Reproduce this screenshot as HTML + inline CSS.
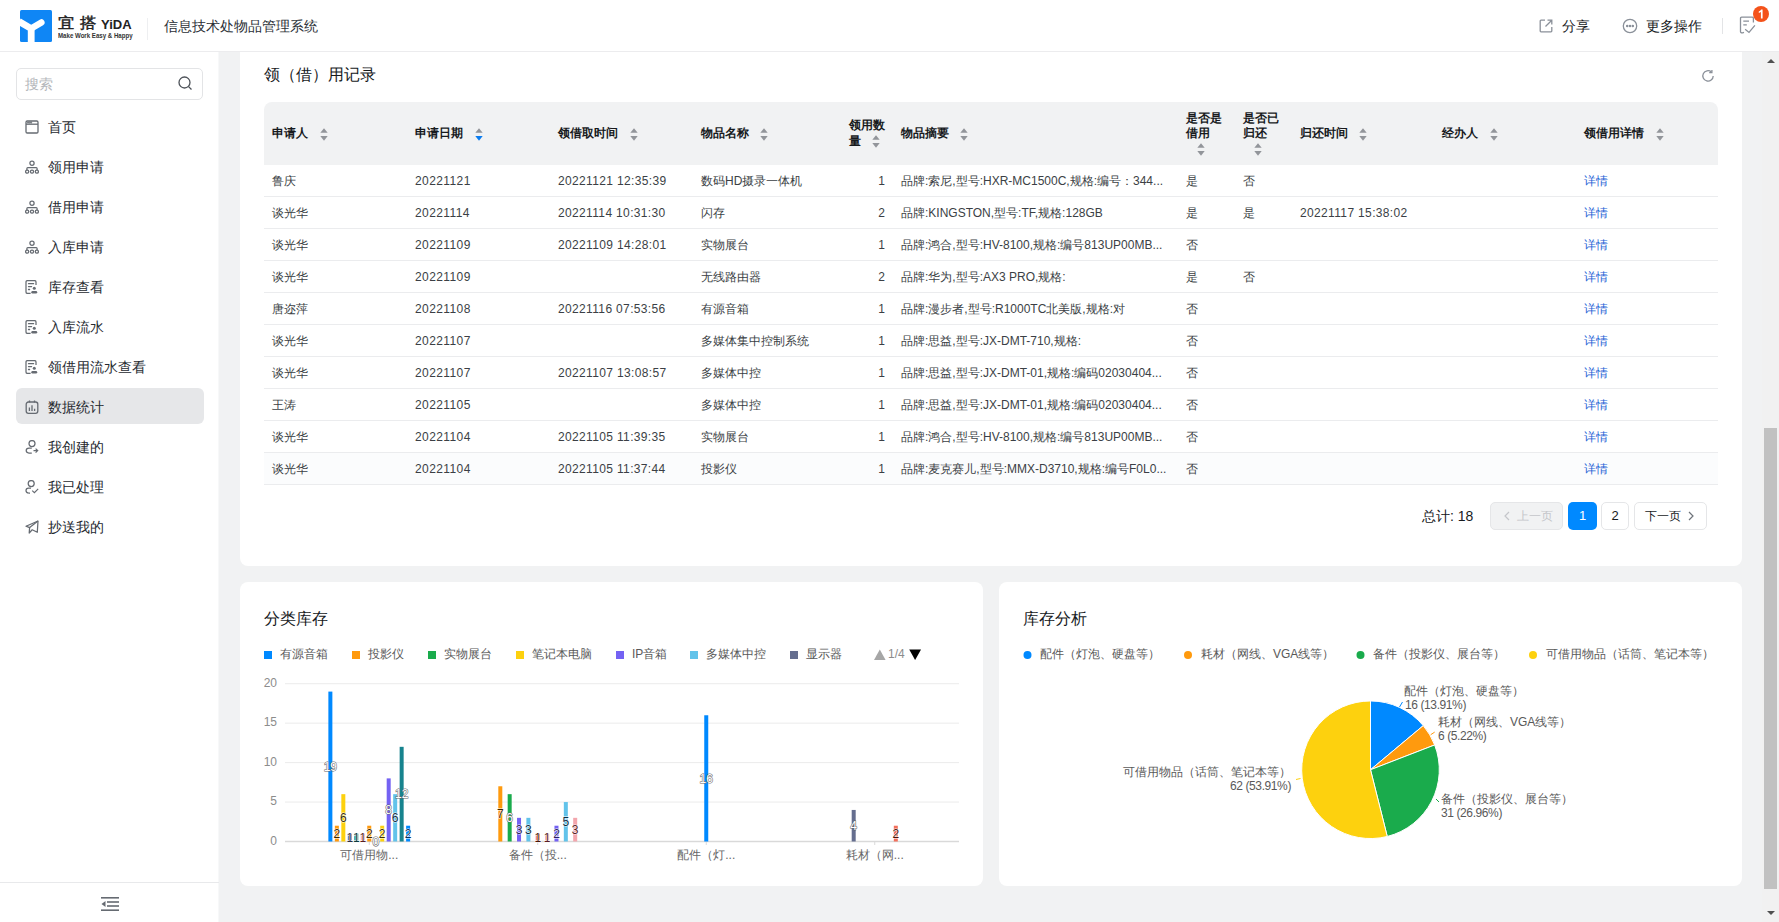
<!DOCTYPE html>
<html><head><meta charset="utf-8">
<style>
*{box-sizing:border-box;margin:0;padding:0}
html,body{width:1779px;height:922px;overflow:hidden;background:#f1f2f3;font-family:"Liberation Sans",sans-serif;color:#171a1d}
.abs{position:absolute}
#hdr{position:absolute;z-index:5;left:0;top:0;width:1779px;height:52px;background:#fff;border-bottom:1px solid #ececee}
#side{position:absolute;left:0;top:51px;width:219px;height:871px;background:#fff;box-shadow:inset -1px 0 0 #f7f8f9}
.nav{position:absolute;left:16px;width:188px;height:36px;border-radius:6px}
.nav.on{background:#e6e7e9}
.nav svg{position:absolute;left:9px;top:12px}
.nav span{position:absolute;left:32px;top:11px;font-size:14px;line-height:16px;color:#262a30}
.card{position:absolute;background:#fff;border-radius:8px}
.t12{font-size:12px;line-height:14px}
.th{position:absolute;font-size:12px;font-weight:bold;line-height:15px;color:#171a1d}
.td{position:absolute;font-size:12px;line-height:14px;color:#3b3f45;white-space:nowrap}
.row{position:absolute;left:24px;width:1454px;height:32px;border-bottom:1px solid #ecedef}
.sort{display:inline-block;width:8px;height:13px;vertical-align:middle}
.lnk{color:#1f63d6}
</style></head><body>

<!-- HEADER -->
<div id="hdr">
  <svg class="abs" style="left:20px;top:10px" width="32" height="32" viewBox="0 0 32 32">
    <rect x="0" y="0" width="32" height="32" rx="1.5" fill="#0f86f5"/>
    <path d="M-1 11.5 L11.2 18.6 L11.2 33" stroke="#fff" stroke-width="6.8" fill="none" stroke-linejoin="miter"/>
    <path d="M11.2 18.6 L21.4 12.4" stroke="#fff" stroke-width="6.4" fill="none" stroke-linecap="round"/>
  </svg>
  <div class="abs" style="left:58px;top:13px;font-size:16.5px;line-height:20px;font-weight:normal;-webkit-text-stroke:0.5px #222;color:#222;letter-spacing:5px;transform-origin:0 0;transform:scaleY(0.92)">宜搭</div>
  <div class="abs" style="left:101px;top:17px;font-size:13px;line-height:16px;font-weight:bold;color:#222">YiDA</div>
  <div class="abs" style="left:58px;top:32px;font-size:6.5px;line-height:8px;font-weight:bold;color:#333;white-space:nowrap;transform-origin:0 0;transform:scaleX(0.94)">Make Work Easy &amp; Happy</div>
  <div class="abs" style="left:147px;top:18px;width:1px;height:22px;background:#eeeff1"></div>
  <div class="abs" style="left:164px;top:18px;font-size:14px;line-height:16px;color:#2b2f36">信息技术处物品管理系统</div>

  <!-- right -->
  <svg class="abs" style="left:1539px;top:19px" width="14" height="14" viewBox="0 0 14 14" fill="none" stroke="#8a9099" stroke-width="1.3">
    <path d="M6 1.2 H2 a0.8 0.8 0 0 0 -0.8 0.8 V12 a0.8 0.8 0 0 0 0.8 0.8 H12 a0.8 0.8 0 0 0 0.8 -0.8 V8"/>
    <path d="M8.5 1.2 H12.8 V5.5 M12.8 1.2 L6.5 7.5"/>
  </svg>
  <div class="abs" style="left:1562px;top:18px;font-size:14px;line-height:16px;color:#171a1d">分享</div>
  <svg class="abs" style="left:1622px;top:18px" width="16" height="16" viewBox="0 0 16 16" fill="none" stroke="#8a9099" stroke-width="1.3">
    <circle cx="8" cy="8" r="6.7"/>
    <circle cx="5.2" cy="8" r="0.6" fill="#8a9099"/><circle cx="8" cy="8" r="0.6" fill="#8a9099"/><circle cx="10.8" cy="8" r="0.6" fill="#8a9099"/>
  </svg>
  <div class="abs" style="left:1646px;top:18px;font-size:14px;line-height:16px;color:#171a1d">更多操作</div>
  <div class="abs" style="left:1722px;top:18px;width:1px;height:16px;background:#e3e4e6"></div>
  <svg class="abs" style="left:1739px;top:16px" width="18" height="18" viewBox="0 0 18 18" fill="none" stroke="#8a9099" stroke-width="1.3">
    <path d="M5 16.3 L3.6 16.8 Q1.5 17 1.5 15.8 V2.3 Q1.5 1.2 2.6 1.2 H13.3 Q14.4 1.2 14.4 2.3 V6.4"/>
    <path d="M4.3 5.2 H10 M4.3 8.9 H7.8"/>
    <path d="M6.1 13.3 L10 16.4 L15.9 9.4"/>
  </svg>
  <svg class="abs" style="left:1753px;top:6px" width="16" height="16" viewBox="0 0 16 16"><circle cx="8" cy="8" r="8" fill="#f4521a"/><path d="M8.2 3.6 H9.6 V12.4 H7.9 V6 Q7 6.7 5.8 7 V5.5 Q7.3 5 8.2 3.6 Z" fill="#fff"/></svg>
</div>

<!-- SIDEBAR -->
<div id="side">
  <div class="abs" style="left:16px;top:17px;width:187px;height:32px;border:1px solid #e3e4e6;border-radius:5px"></div>
  <div class="abs" style="left:25px;top:25px;font-size:14px;line-height:16px;color:#b4b7bb">搜索</div>
  <svg class="abs" style="left:178px;top:25px" width="15" height="15" viewBox="0 0 15 15" fill="none" stroke="#4d5259" stroke-width="1.3"><circle cx="6.5" cy="6.5" r="5.5"/><path d="M10.6 10.6 L13.5 13.5"/></svg>
  <div class="nav" style="top:57px"><svg width="14" height="14" viewBox="0 0 14 14" fill="none" stroke="#666b72" stroke-width="1.3"><rect x="1" y="1" width="12" height="12" rx="1.2"/><path d="M1 4.2 H13"/><circle cx="3" cy="2.6" r="0.35" fill="#666b72"/><circle cx="4.6" cy="2.6" r="0.35" fill="#666b72"/><circle cx="6.2" cy="2.6" r="0.35" fill="#666b72"/></svg><span>首页</span></div>
<div class="nav" style="top:97px"><svg width="14" height="14" viewBox="0 0 14 14" fill="none" stroke="#666b72" stroke-width="1.25"><circle cx="7" cy="3.3" r="2.1"/><path d="M1.9 10 V8.4 Q1.9 7.5 2.8 7.5 H11.2 Q12.1 7.5 12.1 8.4 V10"/><rect x="0.6" y="10" width="3.1" height="3.2" rx="1.4"/><rect x="5.45" y="10" width="3.1" height="3.2" rx="1.4"/><rect x="10.3" y="10" width="3.1" height="3.2" rx="1.4"/></svg><span>领用申请</span></div>
<div class="nav" style="top:137px"><svg width="14" height="14" viewBox="0 0 14 14" fill="none" stroke="#666b72" stroke-width="1.25"><circle cx="7" cy="3.3" r="2.1"/><path d="M1.9 10 V8.4 Q1.9 7.5 2.8 7.5 H11.2 Q12.1 7.5 12.1 8.4 V10"/><rect x="0.6" y="10" width="3.1" height="3.2" rx="1.4"/><rect x="5.45" y="10" width="3.1" height="3.2" rx="1.4"/><rect x="10.3" y="10" width="3.1" height="3.2" rx="1.4"/></svg><span>借用申请</span></div>
<div class="nav" style="top:177px"><svg width="14" height="14" viewBox="0 0 14 14" fill="none" stroke="#666b72" stroke-width="1.25"><circle cx="7" cy="3.3" r="2.1"/><path d="M1.9 10 V8.4 Q1.9 7.5 2.8 7.5 H11.2 Q12.1 7.5 12.1 8.4 V10"/><rect x="0.6" y="10" width="3.1" height="3.2" rx="1.4"/><rect x="5.45" y="10" width="3.1" height="3.2" rx="1.4"/><rect x="10.3" y="10" width="3.1" height="3.2" rx="1.4"/></svg><span>入库申请</span></div>
<div class="nav" style="top:217px"><svg width="14" height="14" viewBox="0 0 14 14" fill="none" stroke="#666b72" stroke-width="1.25"><path d="M5.6 13.4 H2.4 Q1 13.4 1 12 V2 Q1 0.6 2.4 0.6 H9.6 Q11 0.6 11 2 V5"/><path d="M3.5 3.7 H8.6 M3.5 6.6 H6.6 M3.5 9.5 H4.6" stroke-width="1.3" stroke-linecap="round"/><circle cx="9.3" cy="8.3" r="1.5" fill="#666b72" stroke="none"/><rect x="6.3" y="11.1" width="5.9" height="2.4" rx="1.2" fill="#666b72" stroke="none"/></svg><span>库存查看</span></div>
<div class="nav" style="top:257px"><svg width="14" height="14" viewBox="0 0 14 14" fill="none" stroke="#666b72" stroke-width="1.25"><path d="M5.6 13.4 H2.4 Q1 13.4 1 12 V2 Q1 0.6 2.4 0.6 H9.6 Q11 0.6 11 2 V5"/><path d="M3.5 3.7 H8.6 M3.5 6.6 H6.6 M3.5 9.5 H4.6" stroke-width="1.3" stroke-linecap="round"/><circle cx="9.3" cy="8.3" r="1.5" fill="#666b72" stroke="none"/><rect x="6.3" y="11.1" width="5.9" height="2.4" rx="1.2" fill="#666b72" stroke="none"/></svg><span>入库流水</span></div>
<div class="nav" style="top:297px"><svg width="14" height="14" viewBox="0 0 14 14" fill="none" stroke="#666b72" stroke-width="1.25"><path d="M5.6 13.4 H2.4 Q1 13.4 1 12 V2 Q1 0.6 2.4 0.6 H9.6 Q11 0.6 11 2 V5"/><path d="M3.5 3.7 H8.6 M3.5 6.6 H6.6 M3.5 9.5 H4.6" stroke-width="1.3" stroke-linecap="round"/><circle cx="9.3" cy="8.3" r="1.5" fill="#666b72" stroke="none"/><rect x="6.3" y="11.1" width="5.9" height="2.4" rx="1.2" fill="#666b72" stroke="none"/></svg><span>领借用流水查看</span></div>
<div class="nav on" style="top:337px"><svg width="14" height="14" viewBox="0 0 14 14" fill="none" stroke="#666b72" stroke-width="1.3"><rect x="1.2" y="2" width="11.6" height="11.3" rx="2.2"/><path d="M4.5 0.6 V2.4 M9.5 0.6 V2.4"/><path d="M4.4 7.6 V11 M7 5.2 V11 M9.6 8.8 V11" stroke-width="1.3"/></svg><span>数据统计</span></div>
<div class="nav" style="top:377px"><svg width="14" height="14" viewBox="0 0 14 14" fill="none" stroke="#666b72" stroke-width="1.25"><circle cx="7" cy="3.6" r="3"/><path d="M6.8 8.2 H4 Q1.2 8.3 1.2 10.6 Q1.2 13 4 13 H6.8"/><path d="M8.5 10.6 H12.6 M10.6 8.6 L12.7 10.6 L10.6 12.6" stroke-width="1.2"/></svg><span>我创建的</span></div>
<div class="nav" style="top:417px"><svg width="14" height="14" viewBox="0 0 14 14" fill="none" stroke="#666b72" stroke-width="1.25"><circle cx="6.2" cy="3.6" r="3"/><path d="M6 8.2 H3.6 Q1 8.3 1 10.5 Q1 12.9 3.6 13 H5"/><path d="M7.2 10.6 L9.4 12.6 L13.2 8.8" stroke-width="1.2"/></svg><span>我已处理</span></div>
<div class="nav" style="top:457px"><svg width="14" height="14" viewBox="0 0 14 14" fill="none" stroke="#666b72" stroke-width="1.25" stroke-linejoin="round"><path d="M13 1 L1 6.2 L4.6 7.6 L4.2 13 L7.2 9.8 L12.3 12.3 Z"/><path d="M13 1 L4.6 7.6"/></svg><span>抄送我的</span></div>
<div class="abs" style="left:0;top:831px;width:219px;height:1px;background:#e8e9eb"></div>
<svg class="abs" style="left:101px;top:846px" width="18" height="14" viewBox="0 0 18 14" fill="#666b72"><rect x="0" y="0" width="18" height="1.6"/><rect x="6" y="4.2" width="12" height="1.6"/><rect x="6" y="8.2" width="12" height="1.6"/><rect x="0" y="12.4" width="18" height="1.6"/><path d="M0.5 7 L4.5 4 V10 Z"/></svg>

</div>

<!-- CONTENT -->
<div class="card" style="left:240px;top:52px;width:1502px;height:514px;border-radius:0 0 8px 8px"></div>
<div class="abs" style="left:264px;top:66px;font-size:16px;line-height:18px;color:#171a1d">领（借）用记录</div>
<svg class="abs" style="left:1701px;top:69px" width="14" height="14" viewBox="0 0 14 14" fill="none" stroke="#8a9099" stroke-width="1.3"><path d="M12.2 7 A5.2 5.2 0 1 1 10.4 3"/><path d="M10.9 0.9 V3.6 H8.2" stroke-linejoin="miter"/></svg>
<div class="abs" style="left:264px;top:102px;width:1454px;height:63px;background:#f1f2f3;border-radius:8px 8px 0 0"></div>
<div class="th" style="left:272px;top:126px">申请人</div>
<svg class="abs" style="left:319.5px;top:128px" width="8" height="13" viewBox="0 0 8 13"><path d="M4 0.3 L7.7 4.8 H0.3 Z" fill="#92959a"/><path d="M4 12.8 L7.7 8 H0.3 Z" fill="#92959a"/></svg>
<div class="th" style="left:415px;top:126px">申请日期</div>
<svg class="abs" style="left:474.5px;top:128px" width="8" height="13" viewBox="0 0 8 13"><path d="M4 0.3 L7.7 4.8 H0.3 Z" fill="#92959a"/><path d="M4 12.8 L7.7 8 H0.3 Z" fill="#0a7cf0"/></svg>
<div class="th" style="left:558px;top:126px">领借取时间</div>
<svg class="abs" style="left:629.5px;top:128px" width="8" height="13" viewBox="0 0 8 13"><path d="M4 0.3 L7.7 4.8 H0.3 Z" fill="#92959a"/><path d="M4 12.8 L7.7 8 H0.3 Z" fill="#92959a"/></svg>
<div class="th" style="left:701px;top:126px">物品名称</div>
<svg class="abs" style="left:759.5px;top:128px" width="8" height="13" viewBox="0 0 8 13"><path d="M4 0.3 L7.7 4.8 H0.3 Z" fill="#92959a"/><path d="M4 12.8 L7.7 8 H0.3 Z" fill="#92959a"/></svg>
<div class="th" style="left:901px;top:126px">物品摘要</div>
<svg class="abs" style="left:959.5px;top:128px" width="8" height="13" viewBox="0 0 8 13"><path d="M4 0.3 L7.7 4.8 H0.3 Z" fill="#92959a"/><path d="M4 12.8 L7.7 8 H0.3 Z" fill="#92959a"/></svg>
<div class="th" style="left:1300px;top:126px">归还时间</div>
<svg class="abs" style="left:1358.5px;top:128px" width="8" height="13" viewBox="0 0 8 13"><path d="M4 0.3 L7.7 4.8 H0.3 Z" fill="#92959a"/><path d="M4 12.8 L7.7 8 H0.3 Z" fill="#92959a"/></svg>
<div class="th" style="left:1442px;top:126px">经办人</div>
<svg class="abs" style="left:1489.5px;top:128px" width="8" height="13" viewBox="0 0 8 13"><path d="M4 0.3 L7.7 4.8 H0.3 Z" fill="#92959a"/><path d="M4 12.8 L7.7 8 H0.3 Z" fill="#92959a"/></svg>
<div class="th" style="left:1584px;top:126px">领借用详情</div>
<svg class="abs" style="left:1655.5px;top:128px" width="8" height="13" viewBox="0 0 8 13"><path d="M4 0.3 L7.7 4.8 H0.3 Z" fill="#92959a"/><path d="M4 12.8 L7.7 8 H0.3 Z" fill="#92959a"/></svg>
<div class="th" style="left:849px;top:117px;line-height:16px">领用数<br>量</div>
<svg class="abs" style="left:871.5px;top:135px" width="8" height="13" viewBox="0 0 8 13"><path d="M4 0.3 L7.7 4.8 H0.3 Z" fill="#92959a"/><path d="M4 12.8 L7.7 8 H0.3 Z" fill="#92959a"/></svg>
<div class="th" style="left:1186px;top:111px;line-height:15px">是否是<br>借用</div>
<svg class="abs" style="left:1196.5px;top:143px" width="8" height="13" viewBox="0 0 8 13"><path d="M4 0.3 L7.7 4.8 H0.3 Z" fill="#92959a"/><path d="M4 12.8 L7.7 8 H0.3 Z" fill="#92959a"/></svg>
<div class="th" style="left:1243px;top:111px;line-height:15px">是否已<br>归还</div>
<svg class="abs" style="left:1253.5px;top:143px" width="8" height="13" viewBox="0 0 8 13"><path d="M4 0.3 L7.7 4.8 H0.3 Z" fill="#92959a"/><path d="M4 12.8 L7.7 8 H0.3 Z" fill="#92959a"/></svg>
<div class="abs" style="left:264px;top:165px;width:1454px;height:32px;background:#fff;border-bottom:1px solid #ebecee"></div>
<div class="td" style="left:272px;top:174px;letter-spacing:0px">鲁庆</div>
<div class="td" style="left:415px;top:174px;letter-spacing:0.4px">20221121</div>
<div class="td" style="left:558px;top:174px;letter-spacing:0.35px">20221121 12:35:39</div>
<div class="td" style="left:701px;top:174px;letter-spacing:0px">数码HD摄录一体机</div>
<div class="td" style="left:901px;top:174px;letter-spacing:0px">品牌:索尼,型号:HXR-MC1500C,规格:编号：344...</div>
<div class="td" style="left:1186px;top:174px;letter-spacing:0px">是</div>
<div class="td" style="left:1243px;top:174px;letter-spacing:0px">否</div>
<div class="td" style="left:840px;top:174px;width:45px;text-align:right">1</div>
<div class="td lnk" style="left:1584px;top:174px">详情</div>
<div class="abs" style="left:264px;top:197px;width:1454px;height:32px;background:#fff;border-bottom:1px solid #ebecee"></div>
<div class="td" style="left:272px;top:206px;letter-spacing:0px">谈光华</div>
<div class="td" style="left:415px;top:206px;letter-spacing:0.4px">20221114</div>
<div class="td" style="left:558px;top:206px;letter-spacing:0.35px">20221114 10:31:30</div>
<div class="td" style="left:701px;top:206px;letter-spacing:0px">闪存</div>
<div class="td" style="left:901px;top:206px;letter-spacing:0px">品牌:KINGSTON,型号:TF,规格:128GB</div>
<div class="td" style="left:1186px;top:206px;letter-spacing:0px">是</div>
<div class="td" style="left:1243px;top:206px;letter-spacing:0px">是</div>
<div class="td" style="left:1300px;top:206px;letter-spacing:0.35px">20221117 15:38:02</div>
<div class="td" style="left:840px;top:206px;width:45px;text-align:right">2</div>
<div class="td lnk" style="left:1584px;top:206px">详情</div>
<div class="abs" style="left:264px;top:229px;width:1454px;height:32px;background:#fff;border-bottom:1px solid #ebecee"></div>
<div class="td" style="left:272px;top:238px;letter-spacing:0px">谈光华</div>
<div class="td" style="left:415px;top:238px;letter-spacing:0.4px">20221109</div>
<div class="td" style="left:558px;top:238px;letter-spacing:0.35px">20221109 14:28:01</div>
<div class="td" style="left:701px;top:238px;letter-spacing:0px">实物展台</div>
<div class="td" style="left:901px;top:238px;letter-spacing:0px">品牌:鸿合,型号:HV-8100,规格:编号813UP00MB...</div>
<div class="td" style="left:1186px;top:238px;letter-spacing:0px">否</div>
<div class="td" style="left:840px;top:238px;width:45px;text-align:right">1</div>
<div class="td lnk" style="left:1584px;top:238px">详情</div>
<div class="abs" style="left:264px;top:261px;width:1454px;height:32px;background:#fff;border-bottom:1px solid #ebecee"></div>
<div class="td" style="left:272px;top:270px;letter-spacing:0px">谈光华</div>
<div class="td" style="left:415px;top:270px;letter-spacing:0.4px">20221109</div>
<div class="td" style="left:701px;top:270px;letter-spacing:0px">无线路由器</div>
<div class="td" style="left:901px;top:270px;letter-spacing:0px">品牌:华为,型号:AX3 PRO,规格:</div>
<div class="td" style="left:1186px;top:270px;letter-spacing:0px">是</div>
<div class="td" style="left:1243px;top:270px;letter-spacing:0px">否</div>
<div class="td" style="left:840px;top:270px;width:45px;text-align:right">2</div>
<div class="td lnk" style="left:1584px;top:270px">详情</div>
<div class="abs" style="left:264px;top:293px;width:1454px;height:32px;background:#fff;border-bottom:1px solid #ebecee"></div>
<div class="td" style="left:272px;top:302px;letter-spacing:0px">唐迩萍</div>
<div class="td" style="left:415px;top:302px;letter-spacing:0.4px">20221108</div>
<div class="td" style="left:558px;top:302px;letter-spacing:0.35px">20221116 07:53:56</div>
<div class="td" style="left:701px;top:302px;letter-spacing:0px">有源音箱</div>
<div class="td" style="left:901px;top:302px;letter-spacing:0px">品牌:漫步者,型号:R1000TC北美版,规格:对</div>
<div class="td" style="left:1186px;top:302px;letter-spacing:0px">否</div>
<div class="td" style="left:840px;top:302px;width:45px;text-align:right">1</div>
<div class="td lnk" style="left:1584px;top:302px">详情</div>
<div class="abs" style="left:264px;top:325px;width:1454px;height:32px;background:#fff;border-bottom:1px solid #ebecee"></div>
<div class="td" style="left:272px;top:334px;letter-spacing:0px">谈光华</div>
<div class="td" style="left:415px;top:334px;letter-spacing:0.4px">20221107</div>
<div class="td" style="left:701px;top:334px;letter-spacing:0px">多媒体集中控制系统</div>
<div class="td" style="left:901px;top:334px;letter-spacing:0px">品牌:思益,型号:JX-DMT-710,规格:</div>
<div class="td" style="left:1186px;top:334px;letter-spacing:0px">否</div>
<div class="td" style="left:840px;top:334px;width:45px;text-align:right">1</div>
<div class="td lnk" style="left:1584px;top:334px">详情</div>
<div class="abs" style="left:264px;top:357px;width:1454px;height:32px;background:#fff;border-bottom:1px solid #ebecee"></div>
<div class="td" style="left:272px;top:366px;letter-spacing:0px">谈光华</div>
<div class="td" style="left:415px;top:366px;letter-spacing:0.4px">20221107</div>
<div class="td" style="left:558px;top:366px;letter-spacing:0.35px">20221107 13:08:57</div>
<div class="td" style="left:701px;top:366px;letter-spacing:0px">多媒体中控</div>
<div class="td" style="left:901px;top:366px;letter-spacing:0px">品牌:思益,型号:JX-DMT-01,规格:编码02030404...</div>
<div class="td" style="left:1186px;top:366px;letter-spacing:0px">否</div>
<div class="td" style="left:840px;top:366px;width:45px;text-align:right">1</div>
<div class="td lnk" style="left:1584px;top:366px">详情</div>
<div class="abs" style="left:264px;top:389px;width:1454px;height:32px;background:#fff;border-bottom:1px solid #ebecee"></div>
<div class="td" style="left:272px;top:398px;letter-spacing:0px">王涛</div>
<div class="td" style="left:415px;top:398px;letter-spacing:0.4px">20221105</div>
<div class="td" style="left:701px;top:398px;letter-spacing:0px">多媒体中控</div>
<div class="td" style="left:901px;top:398px;letter-spacing:0px">品牌:思益,型号:JX-DMT-01,规格:编码02030404...</div>
<div class="td" style="left:1186px;top:398px;letter-spacing:0px">否</div>
<div class="td" style="left:840px;top:398px;width:45px;text-align:right">1</div>
<div class="td lnk" style="left:1584px;top:398px">详情</div>
<div class="abs" style="left:264px;top:421px;width:1454px;height:32px;background:#fff;border-bottom:1px solid #ebecee"></div>
<div class="td" style="left:272px;top:430px;letter-spacing:0px">谈光华</div>
<div class="td" style="left:415px;top:430px;letter-spacing:0.4px">20221104</div>
<div class="td" style="left:558px;top:430px;letter-spacing:0.35px">20221105 11:39:35</div>
<div class="td" style="left:701px;top:430px;letter-spacing:0px">实物展台</div>
<div class="td" style="left:901px;top:430px;letter-spacing:0px">品牌:鸿合,型号:HV-8100,规格:编号813UP00MB...</div>
<div class="td" style="left:1186px;top:430px;letter-spacing:0px">否</div>
<div class="td" style="left:840px;top:430px;width:45px;text-align:right">1</div>
<div class="td lnk" style="left:1584px;top:430px">详情</div>
<div class="abs" style="left:264px;top:453px;width:1454px;height:32px;background:#fbfcfd;border-bottom:1px solid #ebecee"></div>
<div class="td" style="left:272px;top:462px;letter-spacing:0px">谈光华</div>
<div class="td" style="left:415px;top:462px;letter-spacing:0.4px">20221104</div>
<div class="td" style="left:558px;top:462px;letter-spacing:0.35px">20221105 11:37:44</div>
<div class="td" style="left:701px;top:462px;letter-spacing:0px">投影仪</div>
<div class="td" style="left:901px;top:462px;letter-spacing:0px">品牌:麦克赛儿,型号:MMX-D3710,规格:编号F0L0...</div>
<div class="td" style="left:1186px;top:462px;letter-spacing:0px">否</div>
<div class="td" style="left:840px;top:462px;width:45px;text-align:right">1</div>
<div class="td lnk" style="left:1584px;top:462px">详情</div>
<div class="abs" style="left:1422px;top:508px;font-size:14px;line-height:16px;color:#171a1d">总计: 18</div>
<div class="abs" style="left:1490px;top:502px;width:73px;height:28px;border:1px solid #e5e6e8;background:#f1f2f3;border-radius:5px"></div>
<svg class="abs" style="left:1503px;top:511px" width="8" height="10" viewBox="0 0 8 10" fill="none" stroke="#c4c6ca" stroke-width="1.2"><path d="M6 1 L2 5 L6 9"/></svg>
<div class="abs" style="left:1517px;top:508px;font-size:12px;line-height:16px;color:#c4c6ca">上一页</div>
<div class="abs" style="left:1568px;top:502px;width:29px;height:28px;background:#0089ff;border-radius:5px;color:#fff;font-size:13px;line-height:28px;text-align:center">1</div>
<div class="abs" style="left:1601px;top:502px;width:28px;height:28px;border:1px solid #e5e6e8;border-radius:5px;color:#171a1d;font-size:13px;line-height:26px;text-align:center">2</div>
<div class="abs" style="left:1634px;top:502px;width:73px;height:28px;border:1px solid #e5e6e8;border-radius:5px"></div>
<div class="abs" style="left:1645px;top:508px;font-size:12px;line-height:16px;color:#171a1d">下一页</div>
<svg class="abs" style="left:1687px;top:511px" width="8" height="10" viewBox="0 0 8 10" fill="none" stroke="#6e737a" stroke-width="1.2"><path d="M2 1 L6 5 L2 9"/></svg>

<div class="card" style="left:240px;top:582px;width:743px;height:304px"></div>
<div class="card" style="left:999px;top:582px;width:743px;height:304px"></div>
<svg class="abs" style="left:240px;top:582px" width="743" height="304" viewBox="240 582 743 304" font-family="Liberation Sans, sans-serif">
<rect x="264" y="651" width="8" height="8" fill="#0089ff"/>
<rect x="352" y="651" width="8" height="8" fill="#ff9a0e"/>
<rect x="428" y="651" width="8" height="8" fill="#1aab4c"/>
<rect x="516" y="651" width="8" height="8" fill="#fdd10e"/>
<rect x="616" y="651" width="8" height="8" fill="#7462f3"/>
<rect x="690" y="651" width="8" height="8" fill="#62c3ea"/>
<rect x="790" y="651" width="8" height="8" fill="#656e8f"/>
<path d="M874 660 L879.8 649.5 L885.6 660 Z" fill="#a6a6a6"/>
<path d="M909.2 649.5 L921 649.5 L915.1 660 Z" fill="#000"/>
<rect x="285" y="801.55" width="674" height="1" fill="#ececec"/>
<rect x="285" y="762.10" width="674" height="1" fill="#ececec"/>
<rect x="285" y="722.65" width="674" height="1" fill="#ececec"/>
<rect x="285" y="683.20" width="674" height="1" fill="#ececec"/>
<rect x="285" y="840.75" width="674" height="1.5" fill="#d9d9d9"/>
<text x="277" y="844.50" font-size="12" fill="#8c8c8c" text-anchor="end">0</text>
<text x="277" y="805.05" font-size="12" fill="#8c8c8c" text-anchor="end">5</text>
<text x="277" y="765.60" font-size="12" fill="#8c8c8c" text-anchor="end">10</text>
<text x="277" y="726.15" font-size="12" fill="#8c8c8c" text-anchor="end">15</text>
<text x="277" y="686.70" font-size="12" fill="#8c8c8c" text-anchor="end">20</text>
<rect x="368.75" y="842.0" width="1" height="3" fill="#d9d9d9"/>
<rect x="328.37" y="691.59" width="4" height="149.91" fill="#0089ff"/>
<rect x="334.85" y="825.72" width="4" height="15.78" fill="#ff9a0e"/>
<rect x="341.33" y="794.16" width="4" height="47.34" fill="#fdd10e"/>
<rect x="347.81" y="833.61" width="4" height="7.89" fill="#656e8f"/>
<rect x="354.29" y="833.61" width="4" height="7.89" fill="#13878f"/>
<rect x="360.77" y="833.61" width="4" height="7.89" fill="#f3a6ad"/>
<rect x="367.25" y="825.72" width="4" height="15.78" fill="#ff9a0e"/>
<rect x="380.21" y="825.72" width="4" height="15.78" fill="#fdd10e"/>
<rect x="386.69" y="778.38" width="4" height="63.12" fill="#7462f3"/>
<rect x="393.17" y="794.16" width="4" height="47.34" fill="#62c3ea"/>
<rect x="399.65" y="746.82" width="4" height="94.68" fill="#17838e"/>
<rect x="406.13" y="825.72" width="4" height="15.78" fill="#0089ff"/>
<text x="369.25" y="859" font-size="12" text-anchor="middle" fill="#666">可借用物...</text>
<rect x="537.25" y="842.0" width="1" height="3" fill="#d9d9d9"/>
<rect x="498.31" y="786.27" width="4" height="55.23" fill="#ff9a0e"/>
<rect x="507.67" y="794.16" width="4" height="47.34" fill="#1aab4c"/>
<rect x="517.03" y="817.83" width="4" height="23.67" fill="#7462f3"/>
<rect x="526.39" y="817.83" width="4" height="23.67" fill="#62c3ea"/>
<rect x="535.75" y="833.61" width="4" height="7.89" fill="#ef6a50"/>
<rect x="545.11" y="833.61" width="4" height="7.89" fill="#f3a6ad"/>
<rect x="554.47" y="825.72" width="4" height="15.78" fill="#7462f3"/>
<rect x="563.83" y="802.05" width="4" height="39.45" fill="#62c3ea"/>
<rect x="573.19" y="817.83" width="4" height="23.67" fill="#f3a6ad"/>
<text x="537.75" y="859" font-size="12" text-anchor="middle" fill="#666">备件（投...</text>
<rect x="705.75" y="842.0" width="1" height="3" fill="#d9d9d9"/>
<rect x="704.25" y="715.26" width="4" height="126.24" fill="#0089ff"/>
<text x="706.25" y="859" font-size="12" text-anchor="middle" fill="#666">配件（灯...</text>
<rect x="874.25" y="842.0" width="1" height="3" fill="#d9d9d9"/>
<rect x="851.69" y="809.94" width="4" height="31.56" fill="#656e8f"/>
<rect x="893.81" y="825.72" width="4" height="15.78" fill="#f2705c"/>
<text x="874.75" y="859" font-size="12" text-anchor="middle" fill="#666">耗材（网...</text>
<text x="330.37" y="770.75" font-size="12" text-anchor="middle" fill="#fff" stroke="#666" stroke-width="1" paint-order="stroke">19</text>
<text x="336.85" y="837.81" font-size="12" text-anchor="middle" fill="#3b2500" stroke="#fff" stroke-width="1" paint-order="stroke">2</text>
<text x="343.33" y="822.03" font-size="12" text-anchor="middle" fill="#3a3000" stroke="#fff" stroke-width="1" paint-order="stroke">6</text>
<text x="349.81" y="841.75" font-size="12" text-anchor="middle" fill="#2a2f40" stroke="#fff" stroke-width="1" paint-order="stroke">1</text>
<text x="356.29" y="841.75" font-size="12" text-anchor="middle" fill="#0a3a3d" stroke="#fff" stroke-width="1" paint-order="stroke">1</text>
<text x="362.77" y="841.75" font-size="12" text-anchor="middle" fill="#5a1d24" stroke="#fff" stroke-width="1" paint-order="stroke">1</text>
<text x="369.25" y="837.81" font-size="12" text-anchor="middle" fill="#3b2500" stroke="#fff" stroke-width="1" paint-order="stroke">2</text>
<text x="375.73" y="845.70" font-size="12" text-anchor="middle" fill="#fff" stroke="#666" stroke-width="1" paint-order="stroke">0</text>
<text x="382.21" y="837.81" font-size="12" text-anchor="middle" fill="#3a3000" stroke="#fff" stroke-width="1" paint-order="stroke">2</text>
<text x="388.69" y="814.14" font-size="12" text-anchor="middle" fill="#fff" stroke="#666" stroke-width="1" paint-order="stroke">8</text>
<text x="395.17" y="822.03" font-size="12" text-anchor="middle" fill="#0d2f45" stroke="#fff" stroke-width="1" paint-order="stroke">6</text>
<text x="401.65" y="798.36" font-size="12" text-anchor="middle" fill="#fff" stroke="#666" stroke-width="1" paint-order="stroke">12</text>
<text x="408.13" y="837.81" font-size="12" text-anchor="middle" fill="#06305a" stroke="#fff" stroke-width="1" paint-order="stroke">2</text>
<text x="500.31" y="818.09" font-size="12" text-anchor="middle" fill="#3b2500" stroke="#fff" stroke-width="1" paint-order="stroke">7</text>
<text x="509.67" y="822.03" font-size="12" text-anchor="middle" fill="#fff" stroke="#666" stroke-width="1" paint-order="stroke">6</text>
<text x="519.03" y="833.87" font-size="12" text-anchor="middle" fill="#2a2060" stroke="#fff" stroke-width="1" paint-order="stroke">3</text>
<text x="528.39" y="833.87" font-size="12" text-anchor="middle" fill="#0d2f45" stroke="#fff" stroke-width="1" paint-order="stroke">3</text>
<text x="537.75" y="841.75" font-size="12" text-anchor="middle" fill="#4a1208" stroke="#fff" stroke-width="1" paint-order="stroke">1</text>
<text x="547.11" y="841.75" font-size="12" text-anchor="middle" fill="#5a1d24" stroke="#fff" stroke-width="1" paint-order="stroke">1</text>
<text x="556.47" y="837.81" font-size="12" text-anchor="middle" fill="#2a2060" stroke="#fff" stroke-width="1" paint-order="stroke">2</text>
<text x="565.83" y="825.98" font-size="12" text-anchor="middle" fill="#0d2f45" stroke="#fff" stroke-width="1" paint-order="stroke">5</text>
<text x="575.19" y="833.87" font-size="12" text-anchor="middle" fill="#5a1d24" stroke="#fff" stroke-width="1" paint-order="stroke">3</text>
<text x="706.25" y="782.58" font-size="12" text-anchor="middle" fill="#fff" stroke="#666" stroke-width="1" paint-order="stroke">16</text>
<text x="853.69" y="829.92" font-size="12" text-anchor="middle" fill="#fff" stroke="#666" stroke-width="1" paint-order="stroke">4</text>
<text x="895.81" y="837.81" font-size="12" text-anchor="middle" fill="#4a1208" stroke="#fff" stroke-width="1" paint-order="stroke">2</text>
</svg>
<div class="abs" style="left:264px;top:610px;font-size:16px;line-height:18px;color:#171a1d">分类库存</div>
<div class="abs" style="left:280px;top:647px;font-size:12px;line-height:14px;color:#595959;white-space:nowrap">有源音箱</div>
<div class="abs" style="left:368px;top:647px;font-size:12px;line-height:14px;color:#595959;white-space:nowrap">投影仪</div>
<div class="abs" style="left:444px;top:647px;font-size:12px;line-height:14px;color:#595959;white-space:nowrap">实物展台</div>
<div class="abs" style="left:532px;top:647px;font-size:12px;line-height:14px;color:#595959;white-space:nowrap">笔记本电脑</div>
<div class="abs" style="left:632px;top:647px;font-size:12px;line-height:14px;color:#595959;white-space:nowrap">IP音箱</div>
<div class="abs" style="left:706px;top:647px;font-size:12px;line-height:14px;color:#595959;white-space:nowrap">多媒体中控</div>
<div class="abs" style="left:806px;top:647px;font-size:12px;line-height:14px;color:#595959;white-space:nowrap">显示器</div>
<div class="abs" style="left:888px;top:647px;font-size:12px;line-height:14px;color:#8c8c8c">1/4</div>
<svg class="abs" style="left:999px;top:582px" width="743" height="304" viewBox="999 582 743 304" font-family="Liberation Sans, sans-serif">
<circle cx="1027.5" cy="655" r="4" fill="#0089ff"/>
<circle cx="1188" cy="655" r="4" fill="#ff9a0e"/>
<circle cx="1360.5" cy="655" r="4" fill="#1aab4c"/>
<circle cx="1533" cy="655" r="4" fill="#fdd10e"/>
<path d="M1370.5 769.75 L1370.50 700.95 A68.8 68.8 0 0 1 1423.27 725.61 Z" fill="#0089ff" stroke="#fff" stroke-width="1"/>
<path d="M1370.5 769.75 L1423.27 725.61 A68.8 68.8 0 0 1 1434.67 744.95 Z" fill="#ff9a0e" stroke="#fff" stroke-width="1"/>
<path d="M1370.5 769.75 L1434.67 744.95 A68.8 68.8 0 0 1 1387.25 836.48 Z" fill="#1aab4c" stroke="#fff" stroke-width="1"/>
<path d="M1370.5 769.75 L1387.25 836.48 A68.8 68.8 0 1 1 1370.50 700.95 Z" fill="#fdd10e" stroke="#fff" stroke-width="1"/>
<path d="M1399.5 707 L1402.5 702" stroke="#0089ff" stroke-width="1"/>
<path d="M1430.7 734.7 L1434.7 732.1" stroke="#ff9a0e" stroke-width="1"/>
<path d="M1436 799 L1439 802" stroke="#1aab4c" stroke-width="1"/>
<path d="M1296 779.5 L1300.5 778.5" stroke="#fdd10e" stroke-width="1"/>
</svg>
<div class="abs" style="left:1023px;top:610px;font-size:16px;line-height:18px;color:#171a1d">库存分析</div>
<div class="abs" style="left:1040px;top:647px;font-size:12px;line-height:14px;color:#595959;white-space:nowrap">配件（灯泡、硬盘等）</div>
<div class="abs" style="left:1201px;top:647px;font-size:12px;line-height:14px;color:#595959;white-space:nowrap">耗材（网线、VGA线等）</div>
<div class="abs" style="left:1373px;top:647px;font-size:12px;line-height:14px;color:#595959;white-space:nowrap">备件（投影仪、展台等）</div>
<div class="abs" style="left:1546px;top:647px;font-size:12px;line-height:14px;color:#595959;white-space:nowrap">可借用物品（话筒、笔记本等）</div>
<div class="abs" style="left:1404px;top:684px;font-size:12px;line-height:14px;color:#595959;white-space:nowrap">配件（灯泡、硬盘等）</div>
<div class="abs" style="left:1405px;top:698px;font-size:12px;line-height:14px;color:#595959;white-space:nowrap"><span style="letter-spacing:-0.4px">16 (13.91%)</span></div>
<div class="abs" style="left:1438px;top:715px;font-size:12px;line-height:14px;color:#595959;white-space:nowrap">耗材（网线、VGA线等）</div>
<div class="abs" style="left:1438px;top:729px;font-size:12px;line-height:14px;color:#595959;white-space:nowrap"><span style="letter-spacing:-0.4px">6 (5.22%)</span></div>
<div class="abs" style="left:1441px;top:792px;font-size:12px;line-height:14px;color:#595959;white-space:nowrap">备件（投影仪、展台等）</div>
<div class="abs" style="left:1441px;top:806px;font-size:12px;line-height:14px;color:#595959;white-space:nowrap"><span style="letter-spacing:-0.4px">31 (26.96%)</span></div>
<div class="abs" style="right:488px;top:765px;font-size:12px;line-height:14px;color:#595959;white-space:nowrap;text-align:right">可借用物品（话筒、笔记本等）</div>
<div class="abs" style="right:488px;top:779px;font-size:12px;line-height:14px;color:#595959;white-space:nowrap;text-align:right"><span style="letter-spacing:-0.4px">62 (53.91%)</span></div>

<!-- scrollbar -->
<div class="abs" style="left:1762px;top:52px;width:17px;height:870px;background:#f1f1f1"></div>
<div class="abs" style="left:1764px;top:428px;width:13px;height:461px;background:#c1c1c1"></div>
<div class="abs" style="left:1766.5px;top:59px;width:0;height:0;border-left:4px solid transparent;border-right:4px solid transparent;border-bottom:4px solid #505050"></div>
<div class="abs" style="left:1766.5px;top:911px;width:0;height:0;border-left:4px solid transparent;border-right:4px solid transparent;border-top:4px solid #505050"></div>

</body></html>
